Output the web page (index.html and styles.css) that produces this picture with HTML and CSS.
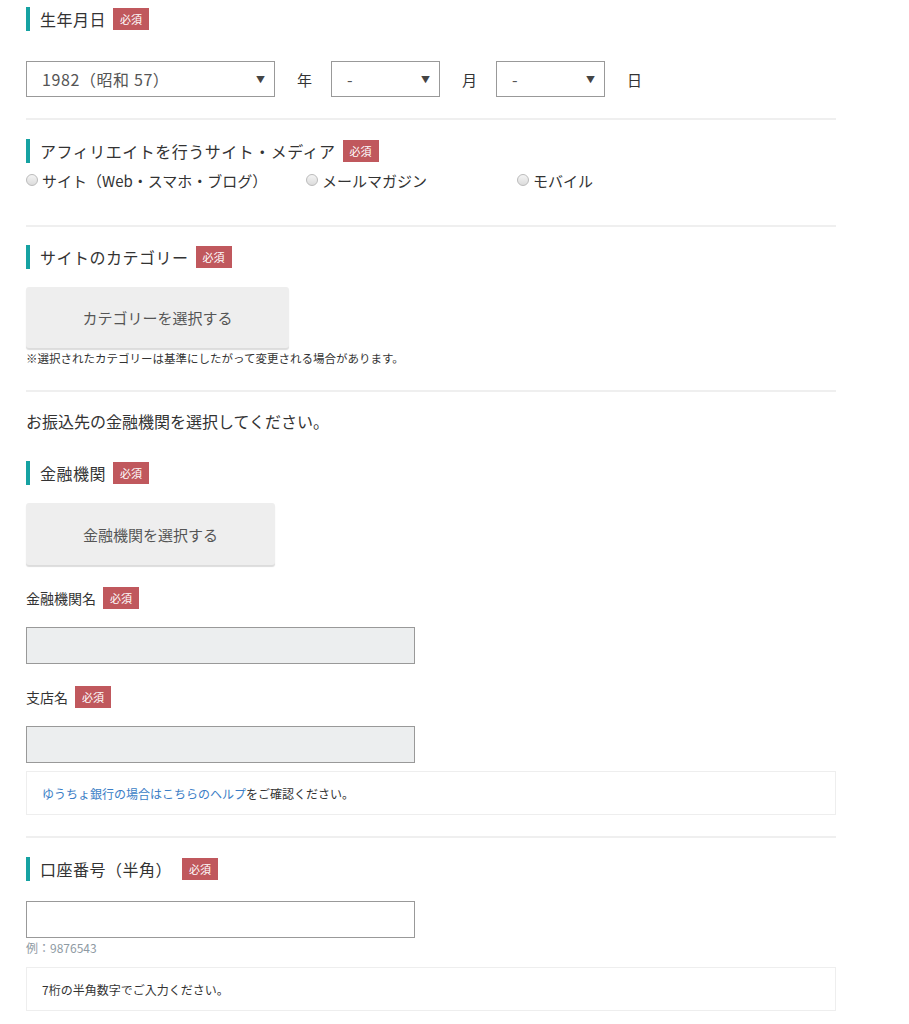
FILE: index.html
```html
<!DOCTYPE html>
<html lang="ja">
<head>
<meta charset="utf-8">
<title>フォーム</title>
<link rel="stylesheet" href="styles.css">
</head>
<body>
<div class="form">
  <section class="sec sec-birth">
    <h3 class="heading">生年月日<span class="req">必須</span></h3>
    <div class="date-row">
      <div class="select sel-year"><span>1982（昭和 57）</span><span class="arrow">▼</span></div>
      <span class="unit">年</span>
      <div class="select sel-small"><span>-</span><span class="arrow">▼</span></div>
      <span class="unit">月</span>
      <div class="select sel-small"><span>-</span><span class="arrow">▼</span></div>
      <span class="unit">日</span>
    </div>
  </section>
  <hr class="sep">
  <section class="sec sec-media">
    <h3 class="heading">アフィリエイトを行うサイト・メディア<span class="req">必須</span></h3>
    <div class="radios">
      <label class="radio"><span class="dot"></span>サイト（Web・スマホ・ブログ）</label>
      <label class="radio"><span class="dot"></span>メールマガジン</label>
      <label class="radio"><span class="dot"></span>モバイル</label>
    </div>
  </section>
  <hr class="sep">
  <section class="sec sec-cat">
    <h3 class="heading">サイトのカテゴリー<span class="req">必須</span></h3>
    <button class="btn btn-cat">カテゴリーを選択する</button>
    <p class="note">※選択されたカテゴリーは基準にしたがって変更される場合があります。</p>
  </section>
  <hr class="sep">
  <section class="sec sec-bank">
    <p class="lead">お振込先の金融機関を選択してください。</p>
    <h3 class="heading heading-bank">金融機関<span class="req">必須</span></h3>
    <button class="btn btn-bank">金融機関を選択する</button>
    <div class="label">金融機関名<span class="req">必須</span></div>
    <div class="input disabled"></div>
    <div class="label">支店名<span class="req">必須</span></div>
    <div class="input disabled"></div>
    <div class="info"><a class="link" href="#">ゆうちょ銀行の場合はこちらのヘルプ</a>をご確認ください。</div>
  </section>
  <hr class="sep">
  <section class="sec sec-acct">
    <h3 class="heading">口座番号（半角）<span class="req req-wide">必須</span></h3>
    <div class="input input-acct"></div>
    <div class="example">例：9876543</div>
    <div class="info info-acct">7桁の半角数字でご入力ください。</div>
  </section>
</div>
</body>
</html>
```

FILE: styles.css
```css
* { box-sizing: border-box; }
html, body { margin: 0; padding: 0; background: #fff; }
body {
  font-family: "Noto Sans CJK JP", "Noto Sans", sans-serif;
  color: #333;
}
.form {
  width: 810px;
  margin-left: 26px;
  padding-top: 7px;
}
.sec { margin: 0; }
.sep {
  border: 0;
  height: 2px;
  background: #efefef;
  margin: 0;
}
.heading {
  display: flex;
  align-items: center;
  height: 24px;
  margin: 0;
  padding-left: 10px;
  border-left: 4px solid #16a2a2;
  font-size: 16px;
  font-weight: normal;
  color: #333;
  line-height: 24px;
  letter-spacing: 0.5px;
}
.req {
  display: inline-flex;
  align-items: center;
  justify-content: center;
  width: 36px;
  height: 22px;
  margin-left: 7px;
  background: #c0585d;
  color: #fff;
  font-size: 11px;
  line-height: 1;
  font-weight: normal;
  letter-spacing: 0;
}
.req-wide { margin-left: 10px; }

/* birth */
.date-row {
  display: flex;
  align-items: center;
  margin-top: 30px;
  padding-bottom: 21px;
}
.select {
  display: flex;
  align-items: center;
  justify-content: space-between;
  height: 36px;
  border: 1px solid #999;
  background: #fff;
  padding: 0 9px 0 15px;
  font-size: 16px;
  color: #555;
  letter-spacing: 0.6px;
}
.sel-year { width: 249px; }
.sel-small { width: 109px; }
.select .arrow { font-size: 9px; color: #444; letter-spacing: 0; }
.unit {
  font-size: 15px;
  margin: 0 19px 0 22px;
  color: #333;
}

/* media */
.sec-media { padding-top: 19px; padding-bottom: 34px; }
.radios {
  display: grid;
  grid-template-columns: 280px 211px auto;
  margin-top: 6px;
  height: 22px;
  align-items: center;
}
.radio {
  display: flex;
  align-items: center;
  font-size: 15px;
  color: #333;
}
.dot {
  width: 12px;
  height: 12px;
  border-radius: 50%;
  border: 1px solid #bbb;
  background: linear-gradient(#f4f4f4, #dcdcdc);
  margin-right: 4px;
}

/* category */
.sec-cat { padding-top: 18px; padding-bottom: 23px; }
.btn {
  display: block;
  border: 0;
  border-radius: 3px;
  background: #eeeeee;
  box-shadow: 0 2px 1px #dcdcdc;
  font-family: inherit;
  font-size: 15px;
  color: #555;
  cursor: pointer;
}
.btn-cat { width: 263px; height: 61px; margin-top: 18px; }
.note {
  margin: 0;
  margin-top: 1px;
  font-size: 11.5px;
  line-height: 18px;
  color: #333;
}

/* bank */
.sec-bank { padding-top: 17px; padding-bottom: 21px; }
.lead {
  margin: 0;
  font-size: 16px;
  line-height: 24px;
}
.heading-bank { margin-top: 28px; }
.btn-bank { width: 249px; height: 62px; margin-top: 18px; }
.label {
  display: flex;
  align-items: center;
  height: 22px;
  margin-top: 22px;
  font-size: 14px;
}
.input {
  width: 389px;
  height: 37px;
  border: 1px solid #999;
  background: #fff;
  margin-top: 18px;
}
.input.disabled { background: #eceeef; }
.info {
  display: flex;
  align-items: center;
  height: 44px;
  margin-top: 8px;
  border: 1px solid #eee;
  padding-left: 15px;
  font-size: 12px;
  color: #333;
}
.link { color: #3b7ec6; text-decoration: none; }

/* account */
.sec-acct { padding-top: 19px; }
.input-acct { margin-top: 20px; }
.example {
  font-size: 12px;
  color: #8e9aa3;
  line-height: 18px;
  margin-top: 1px;
}
.info-acct { margin-top: 10px; }
```
